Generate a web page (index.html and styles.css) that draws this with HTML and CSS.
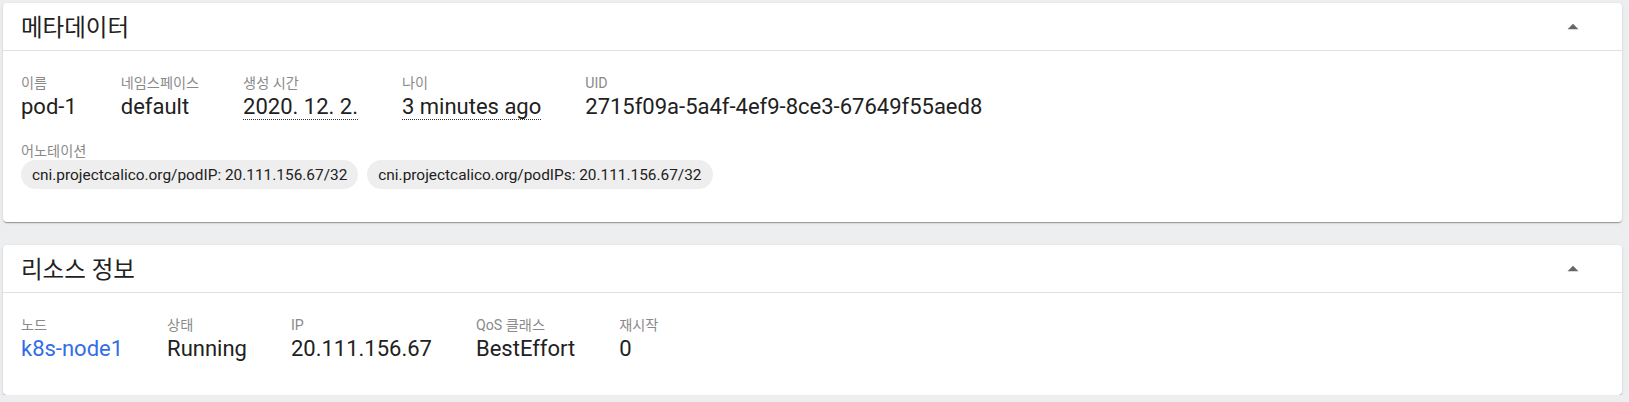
FILE: index.html
```html
<!DOCTYPE html>
<html lang="ko">
<head>
<meta charset="utf-8">
<link rel="stylesheet" href="styles.css">
</head>
<body>
  <div class="page">
    <section class="card">
      <header class="card-header">
        <h2 class="card-title">메타데이터</h2>
        <span class="toggle">
          <svg viewBox="0 0 24 24" width="26" height="26"><path d="M7 14l5-5 5 5z" fill="#666"/></svg>
        </span>
      </header>
      <div class="card-body">
        <div class="props">
          <div class="prop"><div class="label">이름</div><div class="value">pod-1</div></div>
          <div class="prop"><div class="label">네임스페이스</div><div class="value">default</div></div>
          <div class="prop"><div class="label">생성 시간</div><div class="value"><span class="dotted">2020. 12. 2.</span></div></div>
          <div class="prop"><div class="label">나이</div><div class="value"><span class="dotted">3 minutes ago</span></div></div>
          <div class="prop"><div class="label">UID</div><div class="value">2715f09a-5a4f-4ef9-8ce3-67649f55aed8</div></div>
        </div>
        <div class="annotations">
          <div class="label">어노테이션</div>
          <div class="chips">
            <span class="chip">cni.projectcalico.org/podIP: 20.111.156.67/32</span>
            <span class="chip">cni.projectcalico.org/podIPs: 20.111.156.67/32</span>
          </div>
        </div>
      </div>
    </section>

    <section class="card">
      <header class="card-header">
        <h2 class="card-title">리소스 정보</h2>
        <span class="toggle">
          <svg viewBox="0 0 24 24" width="26" height="26"><path d="M7 14l5-5 5 5z" fill="#666"/></svg>
        </span>
      </header>
      <div class="card-body">
        <div class="props">
          <div class="prop"><div class="label">노드</div><div class="value"><a class="link" href="#">k8s-node1</a></div></div>
          <div class="prop"><div class="label">상태</div><div class="value">Running</div></div>
          <div class="prop"><div class="label">IP</div><div class="value">20.111.156.67</div></div>
          <div class="prop"><div class="label">QoS 클래스</div><div class="value">BestEffort</div></div>
          <div class="prop"><div class="label">재시작</div><div class="value">0</div></div>
        </div>
      </div>
    </section>
  </div>
</body>
</html>
```

FILE: styles.css
```css
html, body {
  margin: 0;
  padding: 0;
  background: #edeef0;
}

body {
  font-family: Roboto, "Noto Sans CJK KR", sans-serif;
  color: rgba(0, 0, 0, 0.87);
}

.page {
  padding: 3px 7px 0 3px;
  display: flex;
  flex-direction: column;
  gap: 23px;
}

.card {
  background: #fff;
  border-radius: 4px;
  box-shadow: 0 2px 1px -1px rgba(0,0,0,.2), 0 1px 1px 0 rgba(0,0,0,.14), 0 1px 3px 0 rgba(0,0,0,.12);
}

.card-header {
  height: 47px;
  border-bottom: 1px solid #e0e0e0;
  display: flex;
  align-items: center;
  justify-content: space-between;
  padding: 0 36px 0 18px;
}

.card-title {
  margin: 0;
  padding-top: 3px;
  font-size: 23.5px;
  font-weight: 400;
  line-height: 30px;
  color: #212121;
}

.toggle {
  display: flex;
  width: 26px;
  height: 26px;
}

.card-body {
  padding: 24px 18px 31px 18px;
}

.props {
  display: flex;
  gap: 44px;
}

.label {
  font-size: 14.2px;
  line-height: 17px;
  color: #8a8a8a;
}

.value {
  font-size: 22px;
  line-height: 30px;
  color: #212121;
  white-space: nowrap;
}

.dotted {
  border-bottom: 1px dotted #333;
}

.link {
  color: #326de6;
  text-decoration: none;
}

.annotations {
  margin-top: 21px;
}

.chips {
  display: flex;
  gap: 9px;
  margin-bottom: 2px;
}

.chip {
  display: inline-flex;
  align-items: center;
  height: 29px;
  padding: 0 11px;
  border-radius: 15px;
  background: #eeeeee;
  font-size: 15.4px;
  color: #212121;
}
```
